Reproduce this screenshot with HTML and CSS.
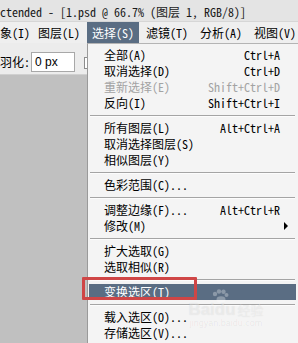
FILE: index.html
```html
<!DOCTYPE html>
<html lang="zh">
<head>
  <meta charset="UTF-8" />
  <title>选择菜单</title>
  <link rel="stylesheet" href="styles.css">
</head>
<body>
  <div class="window">
    <div class="titlebar">ctended - [1.psd @ 66.7% (图层 1, RGB/8)]</div>
    <div class="menubar">
      <span class="menu-item cut">象(I)</span>
      <span class="menu-item">图层(L)</span>
      <span class="menu-item open">选择(S)</span>
      <span class="menu-item">滤镜(T)</span>
      <span class="menu-item">分析(A)</span>
      <span class="menu-item">视图(V)</span>
    </div>
    <div class="workspace">
      <div class="options">
        <span class="opt-label">羽化:</span>
        <span class="opt-input">0 px</span>
        <span class="opt-check"></span>
      </div>
      <div class="canvas"></div>

      <div class="dropdown">
        <div class="row"><span>全部(A)</span><span class="key">Ctrl+A</span></div>
        <div class="row"><span>取消选择(D)</span><span class="key">Ctrl+D</span></div>
        <div class="row disabled"><span>重新选择(E)</span><span class="key">Shift+Ctrl+D</span></div>
        <div class="row"><span>反向(I)</span><span class="key">Shift+Ctrl+I</span></div>
        <div class="sep"></div>
        <div class="row"><span>所有图层(L)</span><span class="key">Alt+Ctrl+A</span></div>
        <div class="row"><span>取消选择图层(S)</span></div>
        <div class="row"><span>相似图层(Y)</span></div>
        <div class="sep"></div>
        <div class="row"><span>色彩范围(C)...</span></div>
        <div class="sep"></div>
        <div class="row"><span>调整边缘(F)...</span><span class="key">Alt+Ctrl+R</span></div>
        <div class="row"><span>修改(M)</span><span class="arrow"></span></div>
        <div class="sep"></div>
        <div class="row"><span>扩大选取(G)</span></div>
        <div class="row"><span>选取相似(R)</span></div>
        <div class="sep"></div>
        <div class="row active"><span>变换选区(T)</span></div>
        <div class="sep"></div>
        <div class="row"><span>载入选区(O)...</span></div>
        <div class="row"><span>存储选区(V)...</span></div>
      </div>

      <div class="mark-box"></div>
      <div class="watermark">
        <svg class="paw" width="18" height="14" viewBox="0 0 18 14">
          <circle cx="4" cy="5" r="2.2" />
          <circle cx="8" cy="2.5" r="2.2" />
          <circle cx="12.5" cy="2.8" r="2.2" />
          <circle cx="15.5" cy="6" r="2" />
          <ellipse cx="10" cy="10.5" rx="4.5" ry="3.2" />
        </svg>
        <div class="wm-line"><span class="wm-bai">Baidu</span><span class="wm-jy">经验</span></div>
        <div class="wm-url">jingyan.baidu.com</div>
      </div>
    </div>
  </div>
</body>
</html>
```

FILE: styles.css
```css
body { margin:0; background:#c0c0c0; font-family: "Noto Sans Mono CJK SC", "Liberation Mono", "Noto Sans CJK SC", monospace; font-size:12px; color:#000; }
.window { width:298px; height:343px; overflow:hidden; display:flex; flex-direction:column; }
.titlebar { height:22px; line-height:24px; background:#e4e4e4; color:#1a1a1a; white-space:nowrap; border-bottom:1px solid #d6d6d6; box-sizing:border-box; }
.menubar { height:21px; display:flex; gap:2px; background:#efefef; white-space:nowrap; }
.menu-item { padding:0 5px; line-height:21px; }
.menu-item.cut { padding:0 1px 0 0; }
.menu-item.open { background:#5a6d83; color:#fff; }
.workspace { flex:1; position:relative; display:flex; flex-direction:column; }
.options { height:32px; box-sizing:border-box; padding-top:9px; display:flex; align-items:flex-start; background:#ececec; border-bottom:1px solid #d0d0d0; }
.opt-label { width:30px; line-height:20px; }
.opt-input { margin-left:1px; width:44px; height:20px; box-sizing:border-box; border:1px solid #a8a8a8; background:#fff; font-family:"Liberation Sans", Arial, sans-serif; font-size:12px; line-height:18px; padding-left:3px; }
.opt-check { margin:5px 0 0 9px; width:10px; height:10px; border:1px solid #8c8c8c; background:#fff; }
.canvas { flex:1; background:#c0c0c0; }

.dropdown { position:absolute; left:87px; top:0; width:211px; height:310px; box-sizing:border-box; padding:3px 2px 0 1px; background:#f4f4f4; border-left:1px solid #9a9a9a; border-top:1px solid #b4b4b4; }
.row { height:16px; line-height:16px; display:flex; justify-content:space-between; align-items:center; padding:0 16px 0 15px; white-space:nowrap; }
.row.disabled { color:#a3a3a3; }
.row.active { background:#5a6d83; color:#fff; }
.arrow { width:0; height:0; border-left:4px solid #000; border-top:4px solid transparent; border-bottom:4px solid transparent; margin-right:-8px; }
.sep { height:9px; box-sizing:border-box; padding-top:4px; }
.sep::before { content:""; display:block; margin:0 1px; border-top:1px solid #a4a4a4; border-bottom:1px solid #fcfcfc; }

.mark-box { position:absolute; left:82px; top:234px; width:115px; height:23px; box-sizing:border-box; border:3px solid #cf4646; border-radius:1px; }
.watermark { position:absolute; left:181px; top:246px; width:90px; color:rgba(255,255,255,0.4); text-align:center; font-family:"Liberation Sans", Arial, sans-serif; }
.paw { display:block; margin:0 auto 0 30px; fill:rgba(255,255,255,0.3); }
.wm-line { white-space:nowrap; line-height:14px; text-shadow:0 0 1px rgba(0,0,0,0.1); }
.wm-bai { font-size:17px; font-weight:bold; }
.wm-jy { font-family:"Noto Sans CJK SC", sans-serif; font-size:13px; margin-left:2px; }
.wm-url { font-size:9px; line-height:11px; color:rgba(0,0,0,0.06); }
```
